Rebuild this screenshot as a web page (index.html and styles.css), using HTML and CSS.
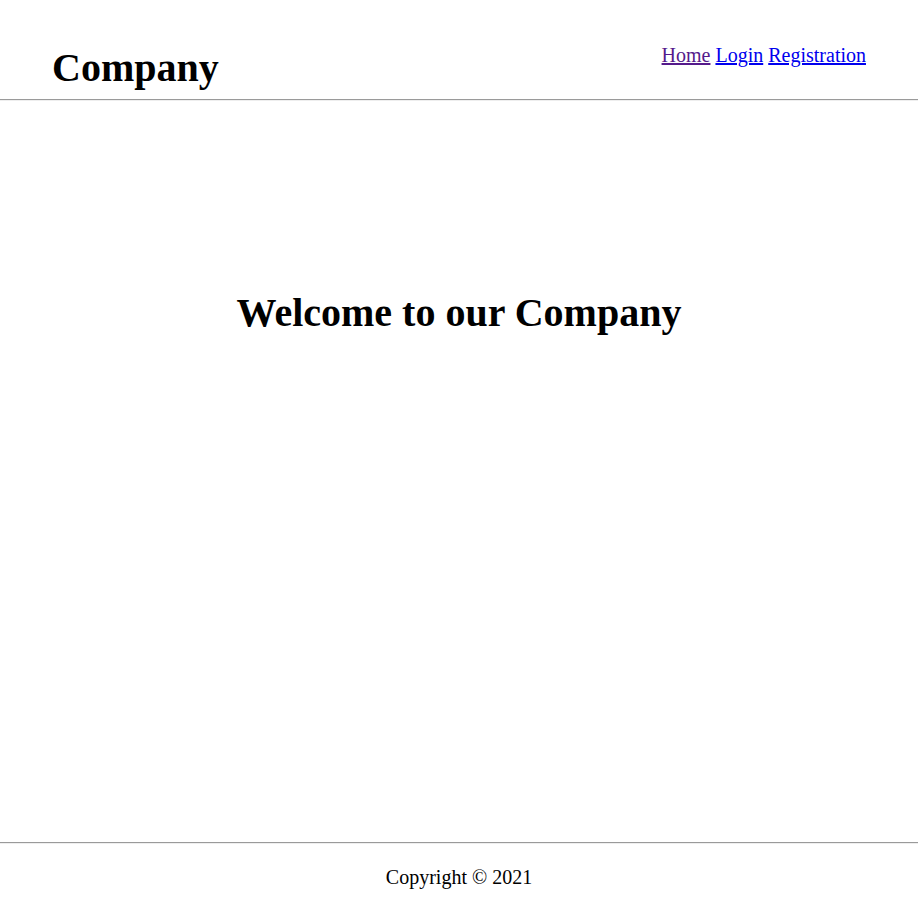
FILE: index.html
```html
<!DOCTYPE html>
<html lang="en">
<head>
<meta charset="utf-8">
<title>Company</title>
<link rel="stylesheet" href="styles.css">
</head>
<body>
<div class="page">
  <header class="site-header">
    <div class="brand">Company</div>
    <nav class="nav">
      <a href="#" class="nav-link visited">Home</a>
      <a href="#" class="nav-link">Login</a>
      <a href="#" class="nav-link">Registration</a>
    </nav>
  </header>
  <hr class="rule">
  <main class="main">
    <h1 class="welcome">Welcome to our Company</h1>
  </main>
  <hr class="rule">
  <footer class="site-footer">Copyright © 2021</footer>
</div>
</body>
</html>
```

FILE: styles.css
```css
html, body {
  margin: 0;
  padding: 0;
  background: #fff;
}
body {
  font-family: "Liberation Serif", "Times New Roman", serif;
  color: #000;
}
.page {
  display: flex;
  flex-direction: column;
  height: 908px;
}
.site-header {
  display: flex;
  justify-content: space-between;
  align-items: flex-start;
  padding: 44px 52px 8px 52px;
}
.brand {
  font-size: 40px;
  font-weight: bold;
  line-height: normal;
}
.nav {
  font-size: 20px;
  line-height: normal;
}
.nav-link {
  color: #0000ee;
  text-decoration: underline;
}
.nav-link.visited {
  color: #551a8b;
}
.rule {
  margin: 0;
  border: 0;
  border-top: 1px solid #9a9a9a;
  border-bottom: 1px solid #eeeeee;
  height: 0;
}
.main {
  flex: 1;
  text-align: center;
  padding-top: 188px;
}
.welcome {
  margin: 0;
  font-size: 40px;
  font-weight: bold;
  line-height: normal;
}
.site-footer {
  text-align: center;
  font-size: 20px;
  line-height: normal;
  padding: 22px 0 19px;
}
```
